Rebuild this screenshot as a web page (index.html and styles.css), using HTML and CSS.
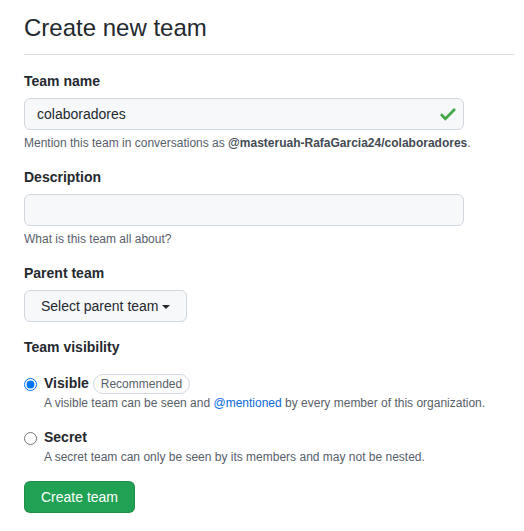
FILE: index.html
```html
<!DOCTYPE html>
<html lang="en">
<head>
<meta charset="utf-8">
<title>Create new team</title>
<link rel="stylesheet" href="styles.css">
</head>
<body>
<main class="page">
  <div class="subhead">
    <h1 class="subhead-heading">Create new team</h1>
  </div>
  <form class="team-form">
    <div class="form-group">
      <div class="form-group-header"><label for="team-name">Team name</label></div>
      <div class="input-wrap">
        <input id="team-name" class="form-control" type="text" value="colaboradores">
        <svg class="check" viewBox="0 3.5 12 9.5" width="16" height="12.7" aria-hidden="true"><path d="M12 5l-8 8-4-4 1.5-1.5L4 10l6.5-6.5L12 5z"/></svg>
      </div>
      <p class="note">Mention this team in conversations as <strong>@masteruah-RafaGarcia24/colaboradores</strong>.</p>
    </div>
    <div class="form-group">
      <div class="form-group-header"><label for="team-desc">Description</label></div>
      <input id="team-desc" class="form-control" type="text" value="">
      <p class="note">What is this team all about?</p>
    </div>
    <div class="form-group">
      <div class="form-group-header"><label>Parent team</label></div>
      <button type="button" class="btn">Select parent team<span class="caret"></span></button>
    </div>
    <div class="form-group">
      <div class="form-group-header"><label>Team visibility</label></div>
      <div class="form-checkbox">
        <label><input type="radio" name="vis" checked>Visible <span class="pill">Recommended</span></label>
        <span class="note">A visible team can be seen and <a href="#">@mentioned</a> by every member of this organization.</span>
      </div>
      <div class="form-checkbox">
        <label><input type="radio" name="vis">Secret</label>
        <span class="note">A secret team can only be seen by its members and may not be nested.</span>
      </div>
    </div>
    <button type="button" class="btn btn-primary">Create team</button>
  </form>
</main>
</body>
</html>
```
FILE: styles.css
```css
html, body {
  margin: 0;
  background: #ffffff;
}
body {
  font-family: "Liberation Sans", Arial, sans-serif;
  font-size: 14px;
  line-height: 1.5;
  color: #24292f;
}
.page {
  width: 490px;
  padding: 10px 10px 0 24px;
}
.subhead {
  border-bottom: 1px solid #d8dee4;
  padding-bottom: 8px;
  margin-bottom: 16px;
}
.subhead-heading {
  margin: 0;
  font-size: 24px;
  font-weight: 400;
  line-height: 36px;
}
.team-form {
  margin: 0;
}
.form-group {
  margin: 15px 0;
}
.form-group-header {
  margin-bottom: 6px;
}
.form-group-header label {
  display: block;
  font-weight: 700;
  font-size: 14px;
  line-height: 21px;
}
.input-wrap {
  position: relative;
  width: 440px;
}
.form-control {
  display: block;
  box-sizing: border-box;
  width: 440px;
  height: 32px;
  margin: 0;
  padding: 5px 12px;
  font-family: inherit;
  font-size: 14px;
  line-height: 20px;
  color: #24292f;
  background: #f6f8fa;
  border: 1px solid #d0d7de;
  border-radius: 6px;
  outline: none;
}
.check {
  position: absolute;
  right: 8px;
  top: 10px;
  fill: #45a849;
}
.note {
  margin: 4px 0 2px;
  font-size: 12px;
  line-height: 18px;
  color: #57606a;
}
.note strong {
  color: #424a53;
}
.btn {
  display: inline-block;
  box-sizing: border-box;
  height: 32px;
  padding: 5px 16px;
  font-family: inherit;
  font-size: 14px;
  line-height: 20px;
  color: #24292f;
  background: #f6f8fa;
  border: 1px solid #d0d7de;
  border-radius: 6px;
  cursor: pointer;
}
.caret {
  display: inline-block;
  width: 0;
  height: 0;
  margin-left: 3px;
  vertical-align: middle;
  border-top: 4px solid currentColor;
  border-left: 4px solid transparent;
  border-right: 4px solid transparent;
}
.form-checkbox {
  padding-left: 20px;
  margin: 15px 0;
}
.form-checkbox label {
  display: block;
  font-weight: 700;
  font-size: 14px;
  line-height: 21px;
}
.form-checkbox input[type="radio"] {
  float: left;
  width: 13px;
  height: 13px;
  margin: 5px 0 0 -20px;
}
.form-checkbox .note {
  display: block;
  margin: 0;
}
.note a {
  color: #0969da;
  text-decoration: none;
}
.pill {
  display: inline-block;
  padding: 0 7px;
  font-size: 12px;
  font-weight: 400;
  line-height: 18px;
  color: #57606a;
  border: 1px solid #d0d7de;
  border-radius: 2em;
}
.btn-primary {
  color: #ffffff;
  background: #21a153;
  border-color: rgba(31, 35, 40, 0.15);
}
```
